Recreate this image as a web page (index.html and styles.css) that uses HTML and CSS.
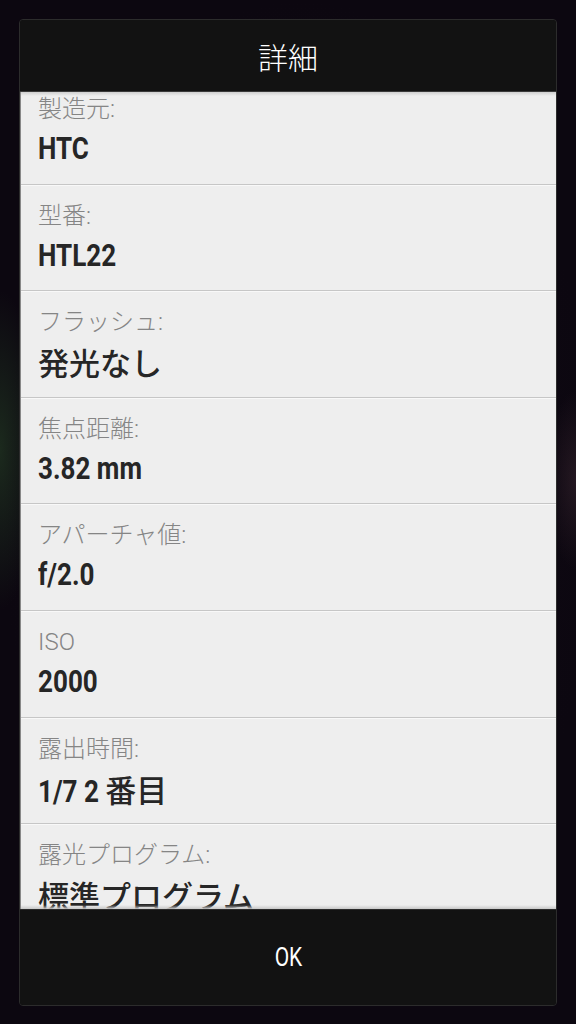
FILE: index.html
```html
<!DOCTYPE html>
<html lang="ja">
<head>
    <meta charset="UTF-8">
    <meta name="viewport" content="width=device-width, initial-scale=1.0">
    <title>詳細</title>
    <link rel="stylesheet" href="styles.css">
</head>
<body>
    <div class="dialog">
        <div class="dialog-title">詳細</div>
        <div class="dialog-body">
            <div class="list">
                <div class="row">
                    <div class="label">製造元:</div>
                    <div class="value"><span class="num">HTC</span></div>
                </div>
                <div class="row">
                    <div class="label">型番:</div>
                    <div class="value"><span class="num">HTL22</span></div>
                </div>
                <div class="row">
                    <div class="label">フラッシュ:</div>
                    <div class="value jp">発光なし</div>
                </div>
                <div class="row">
                    <div class="label">焦点距離:</div>
                    <div class="value"><span class="num">3.82 mm</span></div>
                </div>
                <div class="row">
                    <div class="label">アパーチャ値:</div>
                    <div class="value"><span class="num">f/2.0</span></div>
                </div>
                <div class="row">
                    <div class="label">ISO</div>
                    <div class="value"><span class="num">2000</span></div>
                </div>
                <div class="row">
                    <div class="label">露出時間:</div>
                    <div class="value"><span class="num tight">1/7 2&nbsp;</span><span class="jp">番目</span></div>
                </div>
                <div class="row">
                    <div class="label">露光プログラム:</div>
                    <div class="value jp">標準プログラム</div>
                </div>
            </div>
        </div>
        <div class="dialog-buttons">
            <button class="ok-btn"><span class="num">OK</span></button>
        </div>
    </div>
</body>
</html>
```

FILE: styles.css
```css
html, body {
    height: 100%;
}
body {
    margin: 0;
    padding: 19px 19px 20px 19px;
    box-sizing: border-box;
    font-family: Roboto, "Noto Sans CJK JP", sans-serif;
    background-color: #0c0710;
    background-image:
        radial-gradient(ellipse 40px 160px at 0px 450px, rgba(40, 70, 40, 0.55), transparent),
        radial-gradient(ellipse 30px 90px at 576px 480px, rgba(60, 40, 50, 0.5), transparent),
        radial-gradient(ellipse 300px 500px at 300px 500px, #120b16, transparent);
}
.dialog {
    height: 100%;
    display: flex;
    flex-direction: column;
    border: 1px solid #2c2c2c;
    border-radius: 4px;
    overflow: hidden;
    background: #111;
}
.dialog-title {
    height: 71px;
    flex: none;
    display: flex;
    align-items: center;
    justify-content: center;
    color: #fff;
    font-family: "Noto Sans CJK JP", sans-serif;
    font-size: 30px;
    font-weight: 300;
    background: #121212;
    border-bottom: 1px solid #3a3a3a;
}
.dialog-body {
    flex: 1;
    overflow: hidden;
    position: relative;
    background: #eeeeee;
    border-left: 1px solid #888;
}
.dialog-body::before {
    content: "";
    position: absolute;
    left: 0;
    right: 0;
    top: 0;
    height: 4px;
    background: linear-gradient(#cfcfcf, rgba(238, 238, 238, 0));
    z-index: 1;
}
.dialog-body::after {
    content: "";
    position: absolute;
    left: 0;
    right: 0;
    bottom: 0;
    height: 4px;
    background: linear-gradient(rgba(238, 238, 238, 0), #c8c8c8);
}
.list {
    margin-top: -14px;
}
.row {
    height: 106.6px;
    box-sizing: border-box;
    padding: 16px 0 0 17px;
    border-bottom: 1px solid #c6c6c6;
    box-shadow: 0 1px 0 #f8f8f8;
}
.label {
    font-size: 24px;
    font-weight: 300;
    line-height: 31px;
    color: #858585;
}
.value {
    font-size: 31px;
    font-weight: 700;
    line-height: 48px;
    color: #262626;
    white-space: nowrap;
}
/* condensed look for latin figures */
.num {
    display: inline-block;
    transform: scaleX(0.84);
    transform-origin: left center;
}
.tight {
    margin-right: -13px;
}
.jp {
    font-family: "Noto Sans CJK JP", sans-serif;
    font-size: 31px;
    font-weight: 500;
}
.dialog-buttons {
    height: 95px;
    flex: none;
    background: #121212;
    border-top: 1px solid #2a2a2a;
}
.ok-btn {
    width: 100%;
    height: 100%;
    border: none;
    background: none;
    color: #fff;
    font-family: Roboto, sans-serif;
    font-size: 25px;
    cursor: pointer;
}
.ok-btn .num {
    transform-origin: center;
}
```
